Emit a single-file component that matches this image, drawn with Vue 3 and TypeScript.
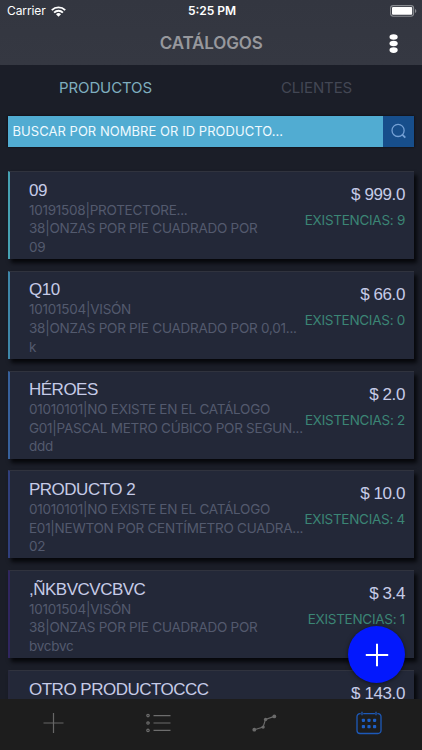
<script setup lang="ts">
interface Product {
  name: string
  lines: string[]
  price: string
  stock?: number
  accent: string
}

const products: Product[] = [
  { name: '09', lines: ['10191508|PROTECTORE...', '38|ONZAS POR PIE CUADRADO POR', '09'], price: '$ 999.0', stock: 9, accent: '#46a1b2' },
  { name: 'Q10', lines: ['10101504|VISÓN', '38|ONZAS POR PIE CUADRADO POR 0,01...', 'k'], price: '$ 66.0', stock: 0, accent: '#3e86a8' },
  { name: 'HÉROES', lines: ['01010101|NO EXISTE EN EL CATÁLOGO', 'G01|PASCAL METRO CÚBICO POR SEGUN...', 'ddd'], price: '$ 2.0', stock: 2, accent: '#37609a' },
  { name: 'PRODUCTO 2', lines: ['01010101|NO EXISTE EN EL CATÁLOGO', 'E01|NEWTON POR CENTÍMETRO CUADRA...', '02'], price: '$ 10.0', stock: 4, accent: '#303f7c' },
  { name: ',ÑKBVCVCBVC', lines: ['10101504|VISÓN', '38|ONZAS POR PIE CUADRADO POR', 'bvcbvc'], price: '$ 3.4', stock: 1, accent: '#30265f' },
  { name: 'OTRO PRODUCTOCCC', lines: [], price: '$ 143.0', accent: '#26283c' },
]
</script>

<template>
  <div class="screen">
    <header class="top">
      <div class="status">
        <div class="carrier">
          <span>Carrier</span>
          <svg width="15" height="11" viewBox="0 0 15 11">
            <g fill="none" stroke="#fff" stroke-width="1.9">
              <path d="M.8 4.1a9.6 9.6 0 0 1 13.4 0" />
              <path d="M3.1 6.6a6.3 6.3 0 0 1 8.8 0" />
            </g>
            <path d="M7.5 10.7 5 8.2a3.6 3.6 0 0 1 5 0z" fill="#fff" />
          </svg>
        </div>
        <span class="clock">5:25 PM</span>
        <svg class="battery" width="27" height="12" viewBox="0 0 27 12">
          <rect x=".6" y=".6" width="23" height="10.6" rx="2.6" fill="none" stroke="#888b90" stroke-width="1.1" />
          <rect x="2" y="2" width="20.2" height="7.8" rx="1.1" fill="#fff" />
          <path d="M25 4v4c1.8-.7 1.8-3.3 0-4z" fill="#888b90" />
        </svg>
      </div>
      <div class="navbar">
        <h1>CATÁLOGOS</h1>
        <svg class="more" width="10" height="20" viewBox="0 0 10 20" fill="#fff">
          <ellipse cx="4.6" cy="3" rx="4.1" ry="2.8" />
          <ellipse cx="4.6" cy="9.5" rx="4.1" ry="2.8" />
          <ellipse cx="4.6" cy="16.1" rx="4.1" ry="2.8" />
        </svg>
      </div>
    </header>

    <nav class="segments">
      <span class="segment active">PRODUCTOS</span>
      <span class="segment">CLIENTES</span>
    </nav>

    <div class="search">
      <span class="query">BUSCAR POR NOMBRE OR ID PRODUCTO...</span>
      <button class="search-button" aria-label="Buscar">
        <svg width="17" height="17" viewBox="0 0 16 16" fill="none" stroke="#75a1d6" stroke-width="1.2">
          <circle cx="7.6" cy="7" r="5.7" />
          <path d="m11.8 11.2 2.6 2.6" stroke-width="1.8" />
        </svg>
      </button>
    </div>

    <main class="list">
      <article v-for="p in products" :key="p.name" class="card" :style="{ borderLeftColor: p.accent }">
        <div class="info">
          <h2>{{ p.name }}</h2>
          <p v-for="line in p.lines" :key="line">{{ line }}</p>
        </div>
        <div class="figures">
          <span class="price">{{ p.price }}</span>
          <span v-if="p.stock !== undefined" class="stock">EXISTENCIAS: {{ p.stock }}</span>
        </div>
      </article>
    </main>

    <button class="fab" aria-label="Agregar">
      <svg width="24" height="24" viewBox="0 0 24 24" stroke="#fff" stroke-width="2">
        <path d="M12 .8v22.4M.8 12h22.4" />
      </svg>
    </button>

    <footer class="tabs">
      <svg width="26" height="26" viewBox="0 0 26 26" stroke="#676767" stroke-width="1.2">
        <path d="M13.500 3v20M3.500 13h20" />
      </svg>
      <svg width="26" height="26" viewBox="0 0 26 26" fill="none" stroke="#6d6d6d" stroke-width="1.2">
        <path d="M8.5 5.6h17M8.5 13h17M8.5 20.4h17" />
        <circle cx="3" cy="5.6" r="1.2" />
        <circle cx="3" cy="13" r="1.2" />
        <circle cx="3" cy="20.4" r="1.2" />
      </svg>
      <svg width="26" height="26" viewBox="0 0 26 26" fill="#6b6b6b" stroke="#6b6b6b">
        <path d="m3.4 19.7 8.7-2.6 2.4-7.7 8.8-3" fill="none" stroke-width="1.2" />
        <g stroke="none">
          <circle cx="3.3" cy="19.7" r="1.9" />
          <circle cx="12.1" cy="17.1" r="1.7" />
          <circle cx="14.6" cy="9.4" r="1.7" />
          <circle cx="23.3" cy="6.4" r="1.9" />
        </g>
      </svg>
      <svg width="26" height="26" viewBox="0 0 26 26" fill="none" stroke="#1d59b8" stroke-width="1.3">
        <path d="M4.7 3.7H4a3 3 0 0 0-3 3v13.800a3 3 0 0 0 3 3h18a3 3 0 0 0 3-3V6.700a3 3 0 0 0-3-3h-.7M7.200 3.700h11.700M6 1.700v3.500M20 1.700v3.500" />
        <g fill="#1d5fc6" stroke="none">
          <rect x="5.800" y="8.700" width="3.200" height="3.200" rx=".8" />
          <rect x="11.400" y="8.700" width="3.200" height="3.200" rx=".8" />
          <rect x="17" y="8.700" width="3.200" height="3.200" rx=".8" />
          <rect x="5.800" y="15" width="3.200" height="3.200" rx=".8" />
          <rect x="11.400" y="15" width="3.200" height="3.200" rx=".8" />
          <rect x="17" y="15" width="3.200" height="3.200" rx=".8" />
        </g>
      </svg>
    </footer>
  </div>
</template>

<style>
body {
  background: #1b1e28;
}
</style>

<style scoped>
.screen {
  position: relative;
  display: flex;
  flex-direction: column;
  width: 422px;
  height: 750px;
  overflow: hidden;
  background: #1b1e28;
  font-family: Inter, "Liberation Sans", sans-serif;
}

.screen * {
  box-sizing: border-box;
}

h1,
h2,
p {
  margin: 0;
  font-weight: 400;
}

button {
  padding: 0;
  border: 0;
}

svg {
  display: block;
}

.top {
  flex: none;
  height: 65px;
  background: linear-gradient(#333640, #353842);
}

.status {
  display: grid;
  grid-template-columns: 1fr auto 1fr;
  align-items: center;
  height: 22px;
  padding: 0 5px 0 7px;
  color: #fff;
  font-size: 12px;
  line-height: 22px;
}

.carrier {
  display: flex;
  align-items: center;
  gap: 5px;
  letter-spacing: -0.1px;
}

.clock {
  font-weight: 600;
}

.battery {
  justify-self: end;
}

.navbar {
  display: grid;
  grid-template-columns: 1fr auto 1fr;
  align-items: center;
  height: 43px;
  padding-right: 23.5px;
}

h1 {
  grid-column: 2;
  margin-left: 24px;
  color: #97989d;
  font-size: 17px;
  font-weight: 600;
  line-height: 43px;
  letter-spacing: -0.15px;
}

.more {
  justify-self: end;
}

.segments {
  flex: none;
  display: grid;
  grid-template-columns: 1fr 1fr;
  height: 51px;
  line-height: 46px;
  font-size: 15px;
  letter-spacing: -0.12px;
  text-align: center;
}

.segment {
  color: #434754;
}

.segment.active {
  color: #7faebf;
}

.search {
  flex: none;
  display: flex;
  height: 31px;
  margin: 0 8px;
  background: #51acd2;
  box-shadow: 0 0 2px #05080d;
}

.query {
  flex: 1;
  padding-left: 4.5px;
  color: #effaff;
  font-size: 13px;
  letter-spacing: 0.04px;
  line-height: 31px;
  white-space: nowrap;
}

.search-button {
  display: flex;
  align-items: center;
  justify-content: center;
  width: 31px;
  background: #174e8b;
}

.list {
  flex: 1;
  display: flex;
  flex-direction: column;
  gap: 11.8px;
  min-height: 0;
  padding: 24px 8px 0;
  overflow: hidden;
}

.card {
  flex: none;
  display: flex;
  height: 88px;
  padding: 8.6px 9px 0 19px;
  border-top: 1.5px solid #30333e;
  border-left: 2px solid;
  background: #232838;
  box-shadow: 3px 4px 4px #06070b;
}

.info {
  flex: 1;
  min-width: 0;
  white-space: nowrap;
}

h2 {
  height: 20px;
  color: #c6cbe7;
  font-family: "Liberation Sans", Arial, sans-serif;
  font-size: 17px;
  line-height: 20px;
  letter-spacing: -0.5px;
}

.info p {
  color: #535a6e;
  font-size: 13.5px;
  line-height: 18.6px;
  letter-spacing: -0.25px;
}

.figures {
  display: flex;
  flex-direction: column;
  align-items: flex-end;
  padding-top: 4.4px;
  white-space: nowrap;
}

.price {
  color: #c6cbe7;
  font-family: "Liberation Sans", Arial, sans-serif;
  font-size: 17px;
  line-height: 20px;
  letter-spacing: -0.4px;
}

.stock {
  margin-top: 5px;
  color: #3b8575;
  font-size: 13.5px;
  line-height: 20px;
  letter-spacing: -0.28px;
}

.fab {
  position: absolute;
  right: 17px;
  bottom: 67px;
  display: flex;
  align-items: center;
  justify-content: center;
  width: 57px;
  height: 57px;
  border-radius: 50%;
  background: #0318fd;
  box-shadow: 0 1px 4px rgba(0, 0, 0, 0.5);
}

.tabs {
  flex: none;
  display: grid;
  grid-template-columns: repeat(4, 1fr);
  justify-items: center;
  height: 51px;
  padding-top: 11px;
  background: #1d1d1d;
}
</style>
